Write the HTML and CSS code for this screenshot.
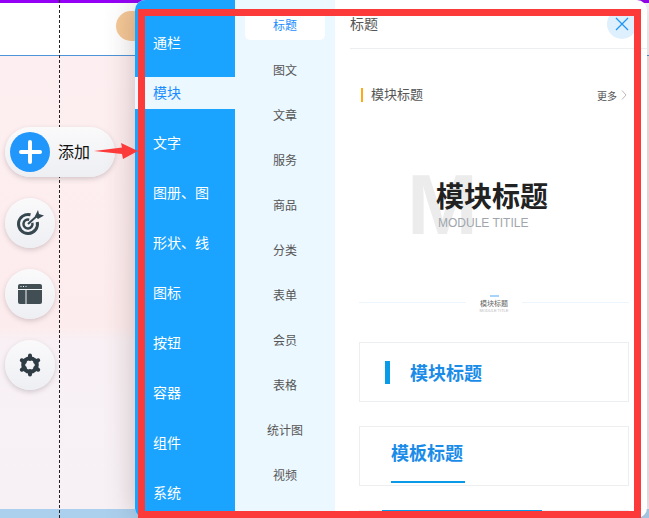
FILE: index.html
```html
<!DOCTYPE html>
<html lang="zh-CN">
<head>
    <meta charset="UTF-8">
    <title>添加模块</title>
    <link rel="stylesheet" href="styles.css">
</head>
<body>
    <div class="stage">
        <div class="canvas">
            <div class="top-bar"></div>
            <div class="site-head"><span class="avatar"></span></div>
            <div class="site-body"></div>
            <div class="site-foot"></div>
        </div>
        <div class="guide"></div>

        <div class="tools">
            <div class="add-btn">
                <span class="plus"></span>
                <span class="add-text">添加</span>
            </div>
            <div class="tool-btn">
                <svg width="28" height="28" viewBox="0 0 28 28">
                    <path d="M14.500 5.800A9.500 9.500 0 1 0 21.300 13" fill="none" stroke="#37474f" stroke-width="3"/>
                    <path d="M13.200 10.700A4.500 4.500 0 1 0 16.300 13.800" fill="none" stroke="#37474f" stroke-width="2.500"/>
                    <path d="M12 15L22 6" stroke="#37474f" stroke-width="2"/>
                    <path d="M19 7L22 1L23 5L28 6.500L22 10Z" fill="#37474f"/>
                </svg>
            </div>
            <div class="tool-btn">
                <svg width="24" height="20" viewBox="0 0 24 20">
                    <rect width="24" height="20" rx="2" fill="#414e54"/>
                    <path d="M0 5.500H24M8 5.500V20" stroke="#f4f5f7" stroke-width="1"/>
                    <path d="M2.500 2.500H3.500M5 2.500H6M7.500 2.500H8.500" stroke="#f4f5f7" stroke-width="1"/>
                </svg>
            </div>
            <div class="tool-btn">
                <svg width="24" height="24" viewBox="0 0 24 24">
                    <circle cx="12" cy="12" r="6.800" fill="none" stroke="#2f3c44" stroke-width="4"/>
                    <path d="M12 2.500V6M12 18V21.500M20.200 7.250L17.200 9M3.800 16.750L6.800 15M20.200 16.750L17.200 15M3.800 7.250L6.800 9" stroke="#2f3c44" stroke-width="4" stroke-linecap="round"/>
                </svg>
            </div>
        </div>

        <div class="panel">
            <ul class="nav">
                <li>通栏</li>
                <li class="active">模块</li>
                <li>文字</li>
                <li>图册、图</li>
                <li>形状、线</li>
                <li>图标</li>
                <li>按钮</li>
                <li>容器</li>
                <li>组件</li>
                <li>系统</li>
            </ul>
            <ul class="sub-nav">
                <li class="active">标题</li>
                <li>图文</li>
                <li>文章</li>
                <li>服务</li>
                <li>商品</li>
                <li>分类</li>
                <li>表单</li>
                <li>会员</li>
                <li>表格</li>
                <li>统计图</li>
                <li>视频</li>
            </ul>
            <div class="content">
                <div class="content-head">标题</div>
                <div class="close-btn">
                    <svg width="14" height="14" viewBox="0 0 14 14">
                        <path d="M1 1L13 13M13 1L1 13" stroke="#2196f3" stroke-width="1.300"/>
                    </svg>
                </div>
                <div class="content-list">
                    <div class="title-one">
                        <span class="title-one-text">模块标题</span>
                        <span class="more">更多</span>
                        <svg class="more-arrow" width="6" height="10" viewBox="0 0 6 10">
                            <path d="M1 0.500L5 5L1 9.500" fill="none" stroke="#bbb" stroke-width="1"/>
                        </svg>
                    </div>
                    <div class="title-two">
                        <span class="title-two-bg">M</span>
                        <div class="title-two-main">模块标题</div>
                        <div class="title-two-sub">MODULE TITILE</div>
                    </div>
                    <div class="title-three">
                        <span class="line"></span>
                        <div class="title-three-mid">
                            <span class="mark"></span>
                            <div class="title-three-main">模块标题</div>
                            <div class="title-three-sub">MODULE TITLE</div>
                        </div>
                        <span class="line"></span>
                    </div>
                    <div class="card card-bar">
                        <span class="bar"></span>
                        <span class="card-title">模块标题</span>
                    </div>
                    <div class="card card-under">
                        <span class="card-title">模板标题</span>
                    </div>
                    <div class="card card-last"></div>
                </div>
            </div>
        </div>

        <div class="frame"></div>
        <svg class="arrow" width="46" height="18" viewBox="0 0 46 18">
            <path d="M0 8L28 4.500L27 0L44 8L29 16L28 11Z" fill="#fc3a3a"/>
        </svg>
    </div>
</body>
</html>
```

FILE: styles.css
```css
* {
    box-sizing: border-box;
}
body {
    margin: 0;
    font-family: "Liberation Sans", "Noto Sans CJK SC", sans-serif;
}
ul {
    list-style: none;
    margin: 0;
    padding: 0;
}
.stage {
    position: relative;
    width: 649px;
    height: 518px;
    overflow: hidden;
    background-color: #fff;
}

/* page behind the panel */
.canvas {
    display: flex;
    flex-direction: column;
    height: 518px;
}
.top-bar {
    height: 3px;
    background-color: #9400f5;
}
.site-head {
    display: flex;
    justify-content: flex-end;
    align-items: center;
    width: 100%;
    height: 53px;
    padding-right: 500px;
    padding-bottom: 6px;
    border-bottom: 1px solid #4d94d8;
    background-color: #fff;
}
.avatar {
    width: 34px;
    height: 30px;
    margin-right: -1px;
    border-radius: 15px;
    background-color: #f5c896;
}
.site-body {
    flex: 1;
    background: linear-gradient(#fdeff1 0, #fdeced 270px, #f8f0f4 285px, #f7f1f5 100%);
}
.site-foot {
    height: 9px;
    background-color: #abd0ee;
}
.guide {
    position: absolute;
    left: 59px;
    top: 0;
    height: 518px;
    border-left: 1px dashed #222;
}

/* floating buttons on the left */
.tools {
    position: absolute;
    left: 5px;
    top: 127px;
    display: flex;
    flex-direction: column;
    align-items: flex-start;
    gap: 21px;
}
.add-btn {
    display: flex;
    align-items: center;
    width: 110px;
    height: 50px;
    padding-left: 5px;
    border-radius: 25px;
    background: linear-gradient(#fafafb, #eeeff3);
    box-shadow: 0 2px 5px rgba(90, 80, 90, 0.25);
}
.plus {
    position: relative;
    width: 40px;
    height: 40px;
    border-radius: 50%;
    background-color: #2196fb;
}
.plus::before,
.plus::after {
    content: "";
    position: absolute;
    border-radius: 2px;
    background-color: #fff;
}
.plus::before {
    left: 9px;
    top: 18px;
    width: 23px;
    height: 4px;
}
.plus::after {
    left: 18px;
    top: 8px;
    width: 4px;
    height: 24px;
}
.add-text {
    margin-left: 8px;
    padding-bottom: 2px;
    font-size: 16px;
    color: #111;
}
.tool-btn {
    display: flex;
    justify-content: center;
    align-items: center;
    width: 50px;
    height: 50px;
    border-radius: 50%;
    background: linear-gradient(#fafafb, #eeeff3);
    box-shadow: 0 2px 5px rgba(90, 80, 90, 0.25);
}
.tool-btn svg {
    display: block;
}

/* insert panel */
.panel {
    position: absolute;
    left: 135px;
    top: 0;
    display: flex;
    width: 512px;
    height: 518px;
    overflow: hidden;
    border-radius: 10px;
    background-color: #fff;
    box-shadow: 0 0 30px rgba(90, 60, 60, 0.3);
}
.nav {
    width: 100px;
    padding-top: 27px;
    background-color: #1aa3ff;
}
.nav li {
    display: flex;
    align-items: center;
    height: 32px;
    margin-bottom: 18px;
    padding-left: 18px;
    padding-bottom: 2px;
    font-size: 14px;
    color: #fff;
}
.nav li.active {
    background-color: #ecf8ff;
    color: #1a8cff;
}
.sub-nav {
    width: 100px;
    padding: 10px 10px 0;
    background-color: #ecf8ff;
}
.sub-nav li {
    display: flex;
    justify-content: center;
    align-items: center;
    height: 30px;
    margin-bottom: 15px;
    padding-bottom: 2px;
    border-radius: 5px;
    font-size: 12px;
    color: #555;
}
.sub-nav li.active {
    background-color: #fff;
    color: #1a8cff;
}
.content {
    position: relative;
    flex: 1;
}
.content-head {
    display: flex;
    align-items: center;
    height: 49px;
    margin-left: 15px;
    padding-bottom: 2px;
    border-bottom: 1px solid #eceef0;
    font-size: 14px;
    color: #555;
}
.close-btn {
    position: absolute;
    right: 10px;
    top: 9px;
    display: flex;
    justify-content: center;
    align-items: center;
    width: 30px;
    height: 30px;
    border-radius: 50%;
    background-color: #deeffe;
}
.content-list {
    padding: 36px 18px 0 24px;
}

/* title styles */
.title-one {
    display: flex;
    align-items: center;
    height: 20px;
    padding: 0 2px;
}
.title-one-text {
    flex: 1;
    padding-left: 8px;
    border-left: 2px solid #ffa914;
    font-size: 13px;
    line-height: 14px;
    color: #555;
}
.more {
    font-size: 10px;
    color: #555;
}
.more-arrow {
    margin-left: 4px;
}
.title-two {
    position: relative;
    height: 70px;
    margin-top: 65px;
    padding-left: 77px;
}
.title-two-bg {
    position: absolute;
    left: 48px;
    top: 0;
    font-size: 85px;
    font-weight: bold;
    line-height: 70px;
    color: #ececec;
}
.title-two-main {
    position: relative;
    padding-top: 9px;
    font-size: 28px;
    font-weight: bold;
    line-height: 37px;
    color: #222;
}
.title-two-sub {
    position: relative;
    margin-left: 2px;
    font-size: 12px;
    line-height: 14px;
    color: #a0a6ac;
}
.title-three {
    display: flex;
    height: 20px;
    margin-top: 55px;
}
.line {
    flex: 1;
    height: 1px;
    margin-top: 7px;
    background-color: #eef6fd;
}
.title-three-mid {
    display: flex;
    flex-direction: column;
    align-items: center;
    width: 56px;
}
.mark {
    width: 9px;
    height: 2px;
    background-color: #a8d4fb;
}
.title-three-main {
    margin-top: 2px;
    font-size: 7px;
    line-height: 9px;
    color: #666;
}
.title-three-sub {
    font-size: 4px;
    line-height: 5px;
    color: #bbb;
}
.card {
    display: flex;
    height: 60px;
    margin-top: 24px;
    border: 1px solid #eceef0;
}
.title-three + .card {
    margin-top: 27px;
}
.card-title {
    font-size: 18px;
    font-weight: bold;
    color: #1a8ce8;
}
.card-bar {
    align-items: center;
    padding-left: 25px;
}
.bar {
    width: 5px;
    height: 23px;
    margin-right: 20px;
    background-color: #0a9be8;
}
.card-under {
    padding-left: 31px;
}
.card-under .card-title {
    height: 56px;
    width: 74px;
    padding-top: 14px;
    line-height: 26px;
    border-bottom: 2px solid #0a9be8;
}
.card-last {
    position: relative;
}
.card-last::before {
    content: "";
    position: absolute;
    left: 22px;
    top: -1px;
    width: 160px;
    height: 2px;
    background-color: #0a9be8;
}

/* red marks drawn over the screenshot */
.frame {
    position: absolute;
    left: 138px;
    top: 9px;
    width: 503px;
    height: 509px;
    border: 7px solid #fc3a3a;
}
.arrow {
    position: absolute;
    left: 94px;
    top: 143px;
}
```
